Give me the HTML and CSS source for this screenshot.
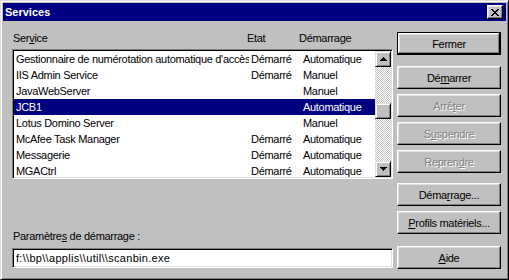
FILE: index.html
```html
<!DOCTYPE html>
<html>
<head>
  <title>Services</title>
<link rel="stylesheet" href="styles.css">
</head>
<body>
  <div class="window">
    <div class="titlebar">
      <span class="title">Services</span>
      <div class="close">
        <svg width="8" height="7" viewBox="0 0 8 7" shape-rendering="crispEdges">
          <rect x="0" y="0" width="2" height="1"/><rect x="6" y="0" width="2" height="1"/>
          <rect x="1" y="1" width="2" height="1"/><rect x="5" y="1" width="2" height="1"/>
          <rect x="2" y="2" width="4" height="1"/>
          <rect x="3" y="3" width="2" height="1"/>
          <rect x="2" y="4" width="4" height="1"/>
          <rect x="1" y="5" width="2" height="1"/><rect x="5" y="5" width="2" height="1"/>
          <rect x="0" y="6" width="2" height="1"/><rect x="6" y="6" width="2" height="1"/>
        </svg>
      </div>
    </div>

    <div class="content">
      <div class="left">
        <div class="headers">
          <span class="col-service">Ser<u>v</u>ice</span>
          <span>Etat</span>
          <span>Démarrage</span>
        </div>

        <div class="listbox">
          <div class="rows">
            <div class="row"><span>Gestionnaire de numérotation automatique d'accès</span><span>Démarré</span><span>Automatique</span></div>
            <div class="row"><span>IIS Admin Service</span><span>Démarré</span><span>Manuel</span></div>
            <div class="row"><span>JavaWebServer</span><span></span><span>Manuel</span></div>
            <div class="row selected"><span>JCB1</span><span></span><span>Automatique</span></div>
            <div class="row"><span>Lotus Domino Server</span><span></span><span>Manuel</span></div>
            <div class="row"><span>McAfee Task Manager</span><span>Démarré</span><span>Automatique</span></div>
            <div class="row"><span>Messagerie</span><span>Démarré</span><span>Automatique</span></div>
            <div class="row"><span>MGACtrl</span><span>Démarré</span><span>Automatique</span></div>
          </div>
          <div class="scrollbar">
            <div class="sb-btn">
              <svg width="7" height="4" viewBox="0 0 7 4" shape-rendering="crispEdges">
                <rect x="3" y="0" width="1" height="1"/><rect x="2" y="1" width="3" height="1"/>
                <rect x="1" y="2" width="5" height="1"/><rect x="0" y="3" width="7" height="1"/>
              </svg>
            </div>
            <div class="track"><div class="thumb"></div></div>
            <div class="sb-btn">
              <svg width="7" height="4" viewBox="0 0 7 4" shape-rendering="crispEdges">
                <rect x="0" y="0" width="7" height="1"/><rect x="1" y="1" width="5" height="1"/>
                <rect x="2" y="2" width="3" height="1"/><rect x="3" y="3" width="1" height="1"/>
              </svg>
            </div>
          </div>
        </div>

        <div class="param-label">Paramètre<u>s</u> de démarrage :</div>
        <div class="field">f:\\bp\\applis\\util\\scanbin.exe</div>
      </div>

      <div class="buttons">
        <div class="btn default">Fermer</div>
        <div class="btn first">Dé<u>m</u>arrer</div>
        <div class="btn disabled">Arrê<u>t</u>er</div>
        <div class="btn disabled">S<u>u</u>spendre</div>
        <div class="btn disabled">Repren<u>d</u>re</div>
        <div class="btn group">Déma<u>r</u>rage...</div>
        <div class="btn"><u>P</u>rofils matériels...</div>
        <div class="btn help"><u>A</u>ide</div>
      </div>
    </div>
  </div>
</body>
</html>
```

FILE: styles.css
```css
body {
  margin: 0;
  background-color: #c0c0c0;
  font-family: "Liberation Sans", Arial, sans-serif;
  font-size: 11px;
  color: #000;
}

u {
  text-decoration-thickness: 1px;
  text-underline-offset: 1px;
}

.window {
  box-sizing: border-box;
  width: 509px;
  height: 280px;
  padding: 2px;
  background-color: #c0c0c0;
  border: 1px solid;
  border-color: #dfdfdf #000 #000 #dfdfdf;
  box-shadow: inset 1px 1px #fff, inset -1px -1px #808080;
}

.titlebar {
  height: 18px;
  background-color: #000080;
  display: flex;
  align-items: center;
  justify-content: space-between;
  padding-left: 2px;
}

.title {
  color: #fff;
  font-weight: bold;
  font-size: 11px;
}

.close {
  box-sizing: border-box;
  width: 16px;
  height: 14px;
  margin-right: 3px;
  background-color: #c0c0c0;
  border: 1px solid;
  border-color: #fff #000 #000 #fff;
  box-shadow: inset -1px -1px #808080, inset 1px 1px #dfdfdf;
  display: flex;
  align-items: center;
  justify-content: center;
}

.content {
  display: grid;
  grid-template-columns: 381px 104px;
  column-gap: 4px;
  padding: 11px 0 0 9px;
  letter-spacing: -0.3px;
}

.left {
  display: flex;
  flex-direction: column;
}

.headers {
  display: grid;
  grid-template-columns: 235px 52px 1fr;
  line-height: 13px;
  height: 13px;
}

.headers .col-service {
  padding-left: 1px;
}

.listbox {
  box-sizing: border-box;
  height: 130px;
  margin-top: 4px;
  display: flex;
  background-color: #fff;
  border: 1px solid;
  border-color: #808080 #fff #fff #808080;
  box-shadow: inset 1px 1px #000, inset -1px -1px #dfdfdf;
  padding: 1px;
}

.rows {
  flex: 1;
  overflow: hidden;
}

.row {
  display: grid;
  grid-template-columns: 235px 52px 1fr;
  height: 16px;
  line-height: 16px;
  white-space: nowrap;
}

.row span {
  overflow: hidden;
  padding-left: 2px;
}

.row.selected {
  background-color: #000080;
  color: #fff;
}

.scrollbar {
  width: 16px;
  display: flex;
  flex-direction: column;
}

.sb-btn,
.thumb {
  box-sizing: border-box;
  width: 16px;
  height: 16px;
  background-color: #c0c0c0;
  border: 1px solid;
  border-color: #dfdfdf #000 #000 #dfdfdf;
  box-shadow: inset 1px 1px #fff, inset -1px -1px #808080;
  display: flex;
  align-items: center;
  justify-content: center;
}

.track {
  flex: 1;
  background: repeating-conic-gradient(#fff 0 25%, #c0c0c0 0 50%) 0 0 / 2px 2px;
}

.thumb {
  margin-top: 36px;
}

.param-label {
  margin-top: 51px;
  line-height: 13px;
  padding-left: 1px;
}

.field {
  box-sizing: border-box;
  height: 20px;
  margin-top: 5px;
  padding: 2px 2px 0 3px;
  line-height: 15px;
  letter-spacing: 0.3px;
  background-color: #fff;
  border: 1px solid;
  border-color: #808080 #fff #fff #808080;
  box-shadow: inset 1px 1px #000, inset -1px -1px #dfdfdf;
  white-space: nowrap;
}

.buttons {
  display: flex;
  flex-direction: column;
  gap: 5px;
}

.btn {
  box-sizing: border-box;
  height: 23px;
  background-color: #c0c0c0;
  border: 1px solid;
  border-color: #fff #000 #000 #fff;
  box-shadow: inset -1px -1px #808080, inset 1px 1px #dfdfdf;
  display: flex;
  align-items: center;
  justify-content: center;
}

.btn.default {
  border-color: #000;
  box-shadow: inset -1px -1px #000, inset 1px 1px #fff, inset -2px -2px #808080, inset 2px 2px #dfdfdf;
}

.btn.first {
  margin-top: 6px;
}

.btn.group {
  margin-top: 5px;
}

.btn.help {
  margin-top: 7px;
}

.btn.disabled {
  color: #808080;
  text-shadow: 1px 1px 0 #fff;
}
```
